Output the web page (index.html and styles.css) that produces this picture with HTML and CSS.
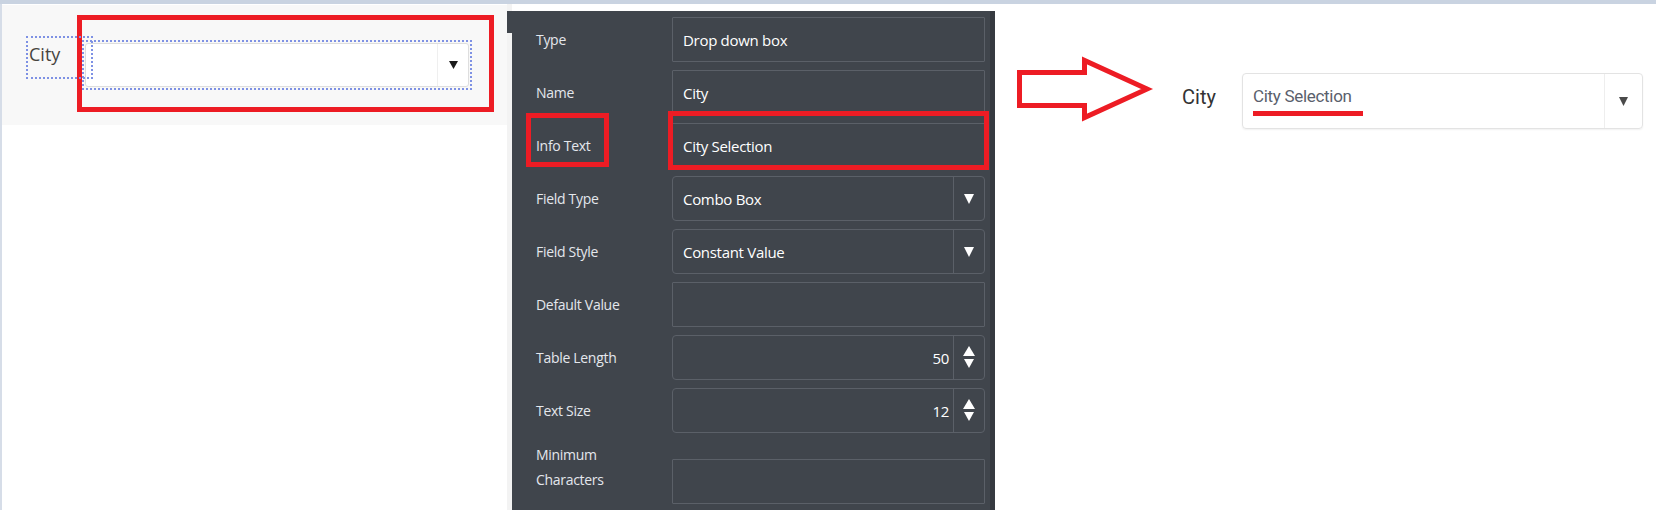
FILE: index.html
```html
<!DOCTYPE html>
<html lang="en">
<head>
    <meta charset="UTF-8">
    <meta name="viewport" content="width=device-width, initial-scale=1.0">
    <title>Field Properties</title>
    <link rel="stylesheet" href="styles.css">
</head>
<body>
    <div class="topbar"></div>

    <div class="workspace">
        <!-- form designer canvas -->
        <div class="designer">
            <div class="canvas">
                <div class="field-label">City</div>
                <div class="field-select">
                    <div class="combo">
                        <span class="combo-btn">
                            <svg width="9" height="8" viewBox="0 0 9 8"><polygon points="0,0 9,0 4.5,8" fill="#1b1b1b"/></svg>
                        </span>
                    </div>
                </div>
            </div>
            <div class="mark mark-designer"></div>
        </div>

        <!-- properties panel -->
        <div class="props">
            <div class="prop-row">
                <div class="prop-label">Type</div>
                <div class="prop-input">Drop down box</div>
            </div>
            <div class="prop-row">
                <div class="prop-label">Name</div>
                <div class="prop-input">City</div>
            </div>
            <div class="prop-row">
                <div class="prop-label">Info Text</div>
                <div class="prop-input">City Selection</div>
            </div>
            <div class="prop-row">
                <div class="prop-label">Field Type</div>
                <div class="prop-input prop-select">
                    <span class="value">Combo Box</span>
                    <span class="btn"><svg width="10" height="10" viewBox="0 0 10 10"><polygon points="0,0 10,0 5,10" fill="#fff"/></svg></span>
                </div>
            </div>
            <div class="prop-row">
                <div class="prop-label">Field Style</div>
                <div class="prop-input prop-select">
                    <span class="value">Constant Value</span>
                    <span class="btn"><svg width="10" height="10" viewBox="0 0 10 10"><polygon points="0,0 10,0 5,10" fill="#fff"/></svg></span>
                </div>
            </div>
            <div class="prop-row">
                <div class="prop-label">Default Value</div>
                <div class="prop-input"></div>
            </div>
            <div class="prop-row">
                <div class="prop-label">Table Length</div>
                <div class="prop-input prop-select">
                    <span class="value number">50</span>
                    <span class="btn"><svg width="14" height="24" viewBox="0 0 14 24"><polygon points="7,0 13,10 1,10" fill="#fff"/><polygon points="2,13 12,13 7,22" fill="#fff"/></svg></span>
                </div>
            </div>
            <div class="prop-row">
                <div class="prop-label">Text Size</div>
                <div class="prop-input prop-select">
                    <span class="value number">12</span>
                    <span class="btn"><svg width="14" height="24" viewBox="0 0 14 24"><polygon points="7,0 13,10 1,10" fill="#fff"/><polygon points="2,13 12,13 7,22" fill="#fff"/></svg></span>
                </div>
            </div>
            <div class="prop-row prop-row-tall">
                <div class="prop-label">Minimum<br>Characters</div>
                <div class="prop-input"></div>
            </div>

            <div class="mark mark-label"></div>
            <div class="mark mark-input"></div>
        </div>

        <!-- result preview -->
        <div class="preview">
            <svg class="arrow" width="145" height="70" viewBox="0 0 145 70">
                <polygon points="7.5,17.5 72.5,17.5 72.5,5.5 135,34 72.5,62.5 72.5,50.5 7.5,50.5" fill="#fff" stroke="#ed1c24" stroke-width="5" stroke-linejoin="miter"/>
            </svg>
            <div class="preview-label">City</div>
            <div class="preview-select">
                <span class="preview-text">City Selection</span>
                <span class="preview-btn"><svg width="9" height="9" viewBox="0 0 9 9"><polygon points="0,0 9,0 4.5,9" fill="#4a4a4a"/></svg></span>
            </div>
        </div>
    </div>
</body>
</html>
```

FILE: styles.css
```css
body {
    margin: 0;
    height: 510px;
    overflow: hidden;
    background-color: #fff;
    font-family: "Open Sans", sans-serif;
}

.topbar {
    height: 4px;
    background-color: #c9d3e1;
}

.workspace {
    display: flex;
    height: 506px;
    overflow: hidden;
}

/* designer */

.designer {
    position: relative;
    width: 512px;
    flex-shrink: 0;
    box-sizing: border-box;
    border-left: 2px solid #d6dde8;
    background: linear-gradient(to right, transparent 505px, #f3f3f3 505px);
}

.canvas {
    display: flex;
    align-items: flex-start;
    width: 505px;
    height: 120px;
    margin-top: 1px;
    background-color: #f8f8f8;
}

.field-label {
    position: relative;
    z-index: 1;
    width: 67px;
    height: 43px;
    margin: 31px 0 0 24px;
    padding: 3px 0 0 1px;
    box-sizing: border-box;
    border: 2px dotted #7e91e4;
    font-size: 18px;
    line-height: 26px;
    color: #46443f;
}

.field-select {
    width: 390px;
    height: 50px;
    margin: 35px 0 0 -11px;
    padding: 1px;
    box-sizing: border-box;
    border: 2px dotted #7e91e4;
}

.combo {
    display: flex;
    justify-content: flex-end;
    height: 100%;
    box-sizing: border-box;
    background-color: #fff;
    border: 1px solid #dedede;
    border-radius: 3px;
}

.combo-btn {
    display: flex;
    align-items: center;
    justify-content: center;
    width: 30px;
    border-left: 1px solid #efefef;
}

.mark {
    position: absolute;
    box-sizing: border-box;
    border: 5px solid #ed1c24;
}

.mark-designer {
    left: 75px;
    top: 11px;
    width: 417px;
    height: 97px;
}

/* properties panel */

.props {
    position: relative;
    width: 483px;
    flex-shrink: 0;
    margin-top: 7px;
    padding: 6px 5px 0 24px;
    box-sizing: border-box;
    background-color: #40454c;
    border-right: 5px solid #363a40;
}

.props::before {
    content: '';
    position: absolute;
    left: -5px;
    top: 0;
    width: 5px;
    height: 22px;
    background-color: #40454c;
}

.prop-row {
    display: flex;
    align-items: center;
    height: 45px;
    margin-bottom: 8px;
}

.prop-label {
    width: 136px;
    flex-shrink: 0;
    font-size: 14px;
    letter-spacing: -0.3px;
    color: #e4e7ec;
}

.prop-input {
    display: flex;
    align-items: center;
    flex: 1;
    height: 45px;
    padding-left: 10px;
    box-sizing: border-box;
    border: 1px solid #5b6068;
    border-radius: 1px;
    font-size: 15px;
    font-weight: 500;
    letter-spacing: -0.3px;
    color: #fff;
}

.prop-select {
    border-radius: 4px;
}

.prop-select .value {
    flex: 1;
}

.prop-select .number {
    text-align: right;
    padding-right: 4px;
}

.prop-select .btn {
    display: flex;
    align-items: center;
    justify-content: center;
    width: 30px;
    height: 100%;
    border-left: 1px solid #5b6068;
}

.prop-row-tall {
    align-items: flex-start;
    height: 63px;
}

.prop-row-tall .prop-label {
    line-height: 25px;
    padding-top: 1px;
}

.prop-row-tall .prop-input {
    margin-top: 18px;
}

.mark-label {
    left: 14px;
    top: 102px;
    width: 83px;
    height: 54px;
}

.mark-input {
    left: 156px;
    top: 100px;
    width: 321px;
    height: 59px;
}

/* preview */

.preview {
    display: flex;
    align-items: flex-start;
    flex: 1;
    padding-left: 17px;
}

.arrow {
    margin-top: 51px;
    flex-shrink: 0;
}

.preview-label {
    margin: 81px 0 0 25px;
    font-family: Roboto, sans-serif;
    font-size: 20px;
    color: #333;
}

.preview-select {
    display: flex;
    align-items: center;
    width: 401px;
    height: 56px;
    margin: 69px 0 0 26px;
    box-sizing: border-box;
    border: 1px solid #e3e3e3;
    border-radius: 4px;
    box-shadow: 0 1px 2px rgba(0, 0, 0, 0.06);
}

.preview-text {
    margin-left: 10px;
    padding: 0 11px 5px 0;
    border-bottom: 5px solid #ed1c24;
    font-family: Roboto, sans-serif;
    font-size: 17px;
    letter-spacing: -0.3px;
    color: #5a606c;
}

.preview-btn {
    display: flex;
    align-items: center;
    justify-content: center;
    width: 37px;
    height: 100%;
    margin-left: auto;
    border-left: 1px solid #eee;
}
```
